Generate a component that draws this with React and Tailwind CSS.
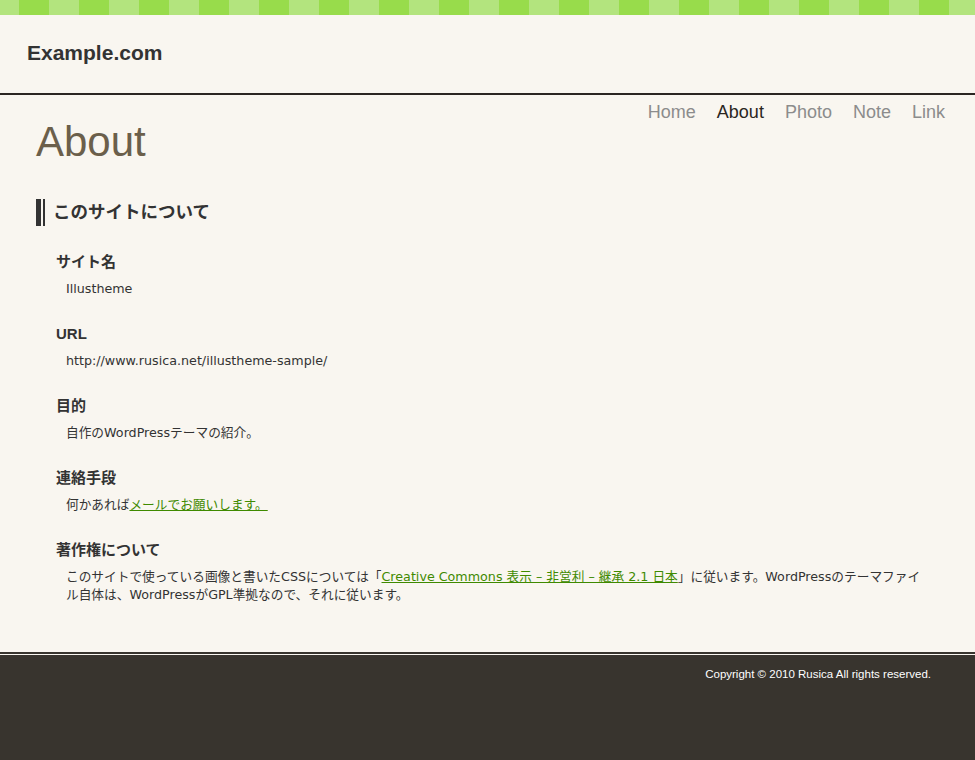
import React from 'react'

const font = { fontFamily: '"Liberation Sans", "Noto Sans CJK JP", sans-serif' }
const bodyFont = { fontFamily: '"DejaVu Sans", "Noto Sans CJK JP", sans-serif' }

const navItems = ["Home", "About", "Photo", "Note", "Link"]

const App = () => {
    return (
        <div className="min-h-screen flex flex-col bg-[#f9f6f0] text-[#333]" style={font}>

            {/* header */}
            <header>
                <div className="h-[15px] bg-[repeating-linear-gradient(90deg,#b3e47e_0_19px,#98dc4b_19px_49px,#b3e47e_49px_60px)]" />
                <div className="h-[78px] flex items-center pl-[27px] pb-[3px]">
                    <p className="text-[21px] font-bold leading-7 text-[#333]">Example.com</p>
                </div>
                <div className="h-[2px] bg-[#2b2622]" />
            </header>

            {/* main */}
            <main className="pl-[36px] pr-[30px] pb-[48px]">
                <div className="flex justify-between items-start">
                    <h1 className="mt-[23px] text-[42px] leading-[48px] text-[#6b5f4b]">About</h1>
                    <nav className="mt-[5px] flex gap-[21px] text-[18px] leading-6">
                        {navItems.map((item) => (
                            <a key={item} href="#" className={item === "About" ? "text-[#2b2622]" : "text-[#8c8c8c]"}>
                                {item}
                            </a>
                        ))}
                    </nav>
                </div>

                <h2 className="mt-[33px] flex h-[27px]">
                    <span className="w-[5px] bg-[#333]" />
                    <span className="w-[2px] ml-[2px] bg-[#333]" />
                    <span className="ml-[8px] text-[17.5px] font-bold leading-[27px]">このサイトについて</span>
                </h2>

                <dl className="mt-[25px] pl-5 pr-[13px]">
                    <dt className="text-[15px] font-bold leading-[22px]">サイト名</dt>
                    <dd className="mt-[7px] pl-2.5 text-[12.7px] leading-[18px]" style={bodyFont}>Illustheme</dd>

                    <dt className="mt-[25px] text-[15px] font-bold leading-[22px]">URL</dt>
                    <dd className="mt-[7px] pl-2.5 text-[12.7px] leading-[18px]" style={bodyFont}>http://www.rusica.net/illustheme-sample/</dd>

                    <dt className="mt-[25px] text-[15px] font-bold leading-[22px]">目的</dt>
                    <dd className="mt-[7px] pl-2.5 text-[12.7px] leading-[18px]" style={bodyFont}>自作のWordPressテーマの紹介。</dd>

                    <dt className="mt-[25px] text-[15px] font-bold leading-[22px]">連絡手段</dt>
                    <dd className="mt-[7px] pl-2.5 text-[12.7px] leading-[18px]" style={bodyFont}>
                        何かあれば<a href="#" className="text-[#3f8a00] underline">メールでお願いします。</a>
                    </dd>

                    <dt className="mt-[25px] text-[15px] font-bold leading-[22px]">著作権について</dt>
                    <dd className="mt-[7px] pl-2.5 text-[12.7px] leading-[18px]" style={bodyFont}>
                        このサイトで使っている画像と書いたCSSについては「<a href="#" className="text-[#3f8a00] underline">Creative Commons 表示 – 非営利 – 継承 2.1 日本</a>」に従います。WordPressのテーマファイル自体は、WordPressがGPL準拠なので、それに従います。
                    </dd>
                </dl>
            </main>

            {/* footer */}
            <div className="mt-auto h-[2px] bg-[#38342e]" />
            <footer className="flex-1 mt-px bg-[#38342e] flex justify-end items-start pr-[44px] pt-[11px] min-h-[100px]">
                <p className="text-[11.5px] leading-4 text-white">Copyright © 2010 Rusica All rights reserved.</p>
            </footer>
        </div>
    )
}

export default App
